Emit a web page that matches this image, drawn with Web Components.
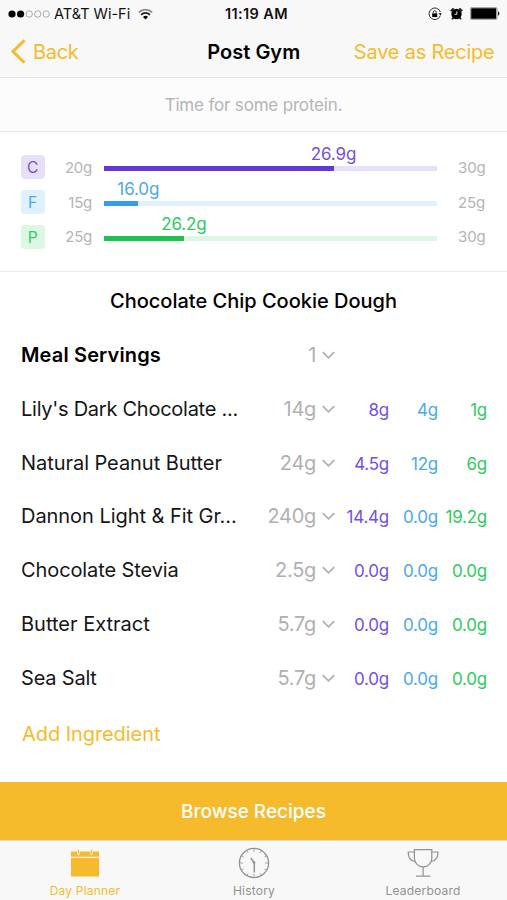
<!DOCTYPE html>
<html lang="en">
<head>
<meta charset="utf-8">
<title>Post Gym</title>
<style>
  body {
    margin: 0;
    font-family: Inter, "Liberation Sans", sans-serif;
  }
</style>
</head>
<body>
<meal-screen></meal-screen>

<script>
// Small helper shared by all the components
function define(name, html, setup) {
  const tmpl = document.createElement('template');
  tmpl.innerHTML = html;

  customElements.define(name, class extends HTMLElement {
    constructor() {
      super();
      this.attachShadow({ mode: 'open' });
    }

    connectedCallback() {
      if (this.shadowRoot.childNodes.length) return;
      this.shadowRoot.appendChild(tmpl.content.cloneNode(true));
      if (setup) setup(this, this.shadowRoot);
    }
  });
}

// Status bar
define('status-bar', `
<style>
  :host {
    display: grid;
    grid-template-columns: 1fr auto 1fr;
    align-items: center;
    height: 27px;
    padding: 0 7px 0 8px;
    box-sizing: border-box;
    font-size: 14.5px;
    color: #111;
  }
  .left, .right { display: flex; align-items: center; }
  .right { justify-content: flex-end; }
  .dots { margin-right: 4px; }
  .wifi { margin-left: 8px; }
  .time { font-weight: 600; letter-spacing: 0.4px; padding-left: 5px; }
  .alarm { margin: 0 7px 0 8px; }
  svg { display: block; }
</style>
<div class="left">
  <svg class="dots" width="42" height="8" viewBox="0 0 42 8">
    <circle cx="4" cy="4" r="3.6"/><circle cx="12.6" cy="4" r="3.6"/>
    <g fill="none" stroke="#999" stroke-width=".8"><circle cx="21.2" cy="4" r="3.2"/><circle cx="29.7" cy="4" r="3.2"/><circle cx="38.2" cy="4" r="3.2"/></g>
  </svg>
  <span>AT&amp;T Wi-Fi</span>
  <svg class="wifi" width="15" height="12" viewBox="0 0 15 12">
    <g fill="none" stroke-width="1.7">
      <path stroke="#8a8a8a" d="M.8 4.3a9.5 9.5 0 0 1 13.4 0"/>
      <path stroke="#222" d="M3 6.8a6.4 6.4 0 0 1 9 0"/>
    </g>
    <path d="M7.5 11.5 5 9a3.5 3.5 0 0 1 5 0z"/>
  </svg>
</div>
<span class="time">11:19 AM</span>
<div class="right">
  <svg width="14" height="14" viewBox="0 0 14 14">
    <path d="M12.4 8.5A5.8 5.8 0 1 1 12.4 5" fill="none" stroke="#333"/>
    <path d="M10.6 6.3h3.2l-1.5 2z"/>
    <rect x="4.2" y="6.4" width="5" height="3.6"/>
    <path d="M5.2 6.5V5.2a1.5 1.5 0 0 1 3 0v1.3" fill="none" stroke="#222" stroke-width=".9"/>
  </svg>
  <svg class="alarm" width="13" height="13" viewBox="0 0 13 13">
    <circle cx="6.5" cy="7" r="5.2"/>
    <path d="M.8 4.2 3.7 1.3M12.2 4.2 9.3 1.3M3.2 10.8 2 12.2M9.8 10.8 11 12.2" stroke="#111" stroke-width="1.9"/>
    <path d="M6.8 4.3v3H4.5" fill="none" stroke="#fff" stroke-width=".9"/>
  </svg>
  <svg width="30" height="13" viewBox="0 0 30 13">
    <rect x=".4" y=".4" width="26.6" height="12.2" rx="1.5" fill="none" stroke="#777" stroke-width=".7"/>
    <rect x="1.2" y="1.2" width="25" height="10.6" rx=".6"/>
    <path d="M28 4.5c1.8.4 1.8 3.6 0 4z"/>
  </svg>
</div>`);

// Navigation bar: back link, title, action
define('nav-bar', `
<style>
  :host {
    display: grid;
    grid-template-columns: 1fr auto 1fr;
    align-items: center;
    height: 50px;
    padding: 0 12.5px 0 11px;
    box-sizing: border-box;
    font-size: 20px;
    color: var(--accent);
  }
  .back { display: flex; align-items: center; gap: 7px; letter-spacing: -0.3px; }
  .back svg { position: relative; top: -1px; }
  .title { color: #000; font-weight: 600; padding-left: 2px; }
  .action { text-align: right; letter-spacing: -0.22px; white-space: nowrap; }
</style>
<div class="back">
  <svg width="15" height="25" viewBox="0 0 15 25"><path d="M13.5 1.2 2 12.5l11.5 11.3" fill="none" stroke="currentColor" stroke-width="3"/></svg>
  <slot name="back"></slot>
</div>
<div class="title"><slot></slot></div>
<div class="action"><slot name="action"></slot></div>`);

// One macro: badge, minimum, track with the current value, maximum
define('macro-range', `
<style>
  :host {
    display: grid;
    grid-template-columns: 24px 47.5px 344.5px 1fr;
    align-items: center;
    height: 34.75px;
    font-size: 15px;
    color: #b4b4b6;
  }
  .badge {
    height: 24px;
    border-radius: 4px;
    background: var(--tint);
    color: var(--tone);
    line-height: 25px;
    text-align: center;
    font-size: 15.5px;
  }
  .min { text-align: right; letter-spacing: -0.2px; }
  .max { padding-left: 21.5px; letter-spacing: -0.2px; }
  .track {
    position: relative;
    height: 5px;
    margin: 2.5px 0 0 12px;
    background: var(--tint);
  }
  .fill { height: 100%; background: var(--solid); }
  .value {
    position: absolute;
    bottom: 6px;
    transform: translateX(-50%);
    font-size: 17px;
    line-height: 21px;
    letter-spacing: -0.1px;
    color: var(--tone);
  }
</style>
<div class="badge"></div>
<div class="min"></div>
<div class="track"><div class="fill"></div><div class="value"></div></div>
<div class="max"></div>`, (el, root) => {
  ['badge', 'min', 'value', 'max'].forEach(key => {
    root.querySelector('.' + key).textContent = el.getAttribute(key);
  });
  root.querySelector('.fill').style.width = el.getAttribute('at') + '%';
  root.querySelector('.value').style.left = el.getAttribute('at') + '%';
});

// Ingredient line with amount picker and macros
define('meal-row', `
<style>
  :host {
    display: grid;
    grid-template-columns: 225px 70px 19px 54px 49px 49px;
    align-items: baseline;
    height: 53.8px;
    line-height: 53.8px;
    font-size: 20px;
    color: #161616;
    white-space: nowrap;
  }
  .name { letter-spacing: var(--track, -0.05px); }
  :host([strong]) .name { font-weight: 600; color: #000; letter-spacing: 0.15px; }
  .amount { text-align: right; color: #b0b0b2; letter-spacing: -0.3px; }
  svg { justify-self: end; }
  .macro { font-size: 17px; letter-spacing: -0.25px; display: flex; justify-content: flex-end; }
  .c { color: #7450e0; }
  .f { color: #4ba8ee; }
  .p { color: #2ecb5d; }
</style>
<div class="name"><slot></slot></div>
<div class="amount"></div>
<svg width="13" height="11" viewBox="0 0 13 11"><path d="m.8 1.2 5.7 5.6 5.7-5.6" fill="none" stroke="#b0b0b2" stroke-width="1.8"/></svg>
<div class="macro c"></div>
<div class="macro f"></div>
<div class="macro p"></div>`, (el, root) => {
  root.querySelector('.amount').textContent = el.getAttribute('amount');
  ['c', 'f', 'p'].forEach(key => {
    root.querySelector('.' + key).textContent = el.getAttribute(key) || '';
  });
});

// Tab bar item, icon goes to the default slot
define('tab-item', `
<style>
  :host {
    display: flex;
    flex-direction: column;
    align-items: center;
    flex: 1;
    padding-top: 6px;
    color: #929292;
    font-size: 12px;
  }
  :host([active]) { color: var(--accent); }
  .icon { height: 34px; }
  .label { line-height: 19px; letter-spacing: 0.2px; padding-left: 1px; }
</style>
<div class="icon"><slot></slot></div>
<div class="label"><slot name="label"></slot></div>`);

define('meal-screen', `
<style>
  :host {
    --accent: #f5bb2c;
    display: flex;
    flex-direction: column;
    width: 507px;
    height: 900px;
    overflow: hidden;
    background: #fff;
  }
  :host > * { flex-shrink: 0; }
  .top, .note, .macros, .recipe, .rows, .add, .browse, .tabs { box-sizing: border-box; flex: none; }
  .top { height: 78px; background: #f8f8f8; border-bottom: 1px solid #e6e6e6; }
  .note {
    height: 54px;
    line-height: 55px;
    background: #fcfcfc;
    border-bottom: 1px solid #e9e9e9;
    text-align: center;
    font-size: 17px;
    letter-spacing: -0.18px;
    color: #b5b5b7;
  }
  .macros { height: 140px; padding: 18px 20px 0 20.6px; border-bottom: 1px solid #eaeaea; }
  .recipe { height: 57px; line-height: 59px; text-align: center; font-size: 20px; font-weight: 500; }
  .rows { padding-left: 21px; }
  .add { padding: 0 22px; line-height: 57px; height: 76px; font-size: 20px; letter-spacing: -0.07px; color: var(--accent); }
  .browse {
    height: 58.4px;
    line-height: 60px;
    text-align: center;
    background: var(--accent);
    color: #fff;
    font-size: 19px;
    font-weight: 500;
  }
  .tabs { display: flex; height: 60px; background: #f8f8f8; border-top: 1px solid #e0dccf; }
  svg { display: block; }
</style>
<div class="top">
  <status-bar></status-bar>
  <nav-bar><span slot="back">Back</span>Post Gym<span slot="action">Save as Recipe</span></nav-bar>
</div>
<div class="note">Time for some protein.</div>
<div class="macros">
  <macro-range badge="C" min="20g" max="30g" value="26.9g" at="69" style="--tint:#e6e0fb;--tone:#7450e0;--solid:#6338d8"></macro-range>
  <macro-range badge="F" min="15g" max="25g" value="16.0g" at="10.3" style="--tint:#e0f1fe;--tone:#4ba8ee;--solid:#379de8"></macro-range>
  <macro-range badge="P" min="25g" max="30g" value="26.2g" at="24" style="--tint:#dcf7e4;--tone:#2ecb5d;--solid:#1ac44d"></macro-range>
</div>
<div class="recipe">Chocolate Chip Cookie Dough</div>
<div class="rows">
  <meal-row strong amount="1">Meal Servings</meal-row>
  <meal-row amount="14g" c="8g" f="4g" p="1g" style="--track:-0.26px">Lily's Dark Chocolate ...</meal-row>
  <meal-row amount="24g" c="4.5g" f="12g" p="6g">Natural Peanut Butter</meal-row>
  <meal-row amount="240g" c="14.4g" f="0.0g" p="19.2g">Dannon Light &amp; Fit Gr...</meal-row>
  <meal-row amount="2.5g" c="0.0g" f="0.0g" p="0.0g" style="--track:-0.1px">Chocolate Stevia</meal-row>
  <meal-row amount="5.7g" c="0.0g" f="0.0g" p="0.0g" style="--track:0px">Butter Extract</meal-row>
  <meal-row amount="5.7g" c="0.0g" f="0.0g" p="0.0g" style="--track:-0.2px">Sea Salt</meal-row>
</div>
<div class="add">Add Ingredient</div>
<div class="browse">Browse Recipes</div>
<div class="tabs">
  <tab-item active>
    <svg width="28" height="30" viewBox="0 0 28 30">
      <path fill="currentColor" d="M0 4.5h6.2v2a1.3 1.3 0 0 0 2.6 0v-2h10.4v2a1.3 1.3 0 0 0 2.6 0v-2H28v5.3H0zM0 11h28v18.5H0zM6.8 2.8h1.4v3.5H6.8zM19.8 2.8h1.4v3.5h-1.4z"/>
    </svg>
    <span slot="label">Day Planner</span>
  </tab-item>
  <tab-item>
    <svg width="32" height="32" viewBox="0 0 32 32" fill="none" stroke="currentColor">
      <circle cx="16" cy="16" r="14.6" stroke-width="1.3"/>
      <path stroke-width=".8" d="M16 2v3M16 27v3M2 16h3M27 16h3M9 3.9l1 1.7M23 3.9l-1 1.7M3.9 9l1.7 1M28.1 9l-1.7 1M3.9 23l1.7-1M28.1 23l-1.7-1M9 28.1l1-1.7M23 28.1l-1-1.7"/>
      <path stroke-width="1.5" d="M16.3 25.5V16l-3.5-5.2"/>
      <circle cx="16" cy="15.5" r=".9" fill="currentColor"/>
    </svg>
    <span slot="label">History</span>
  </tab-item>
  <tab-item>
    <svg width="32" height="32" viewBox="0 0 32 32" fill="none" stroke="currentColor" stroke-width="1.2">
      <path d="M7.4 2.6h17.4v8.6a8.7 8.7 0 0 1-17.4 0zM16.1 20v8.8M9 29.2h14.2"/>
      <path d="M7.4 5H1.2c0 5.5 2 8.8 6.8 9.5M24.8 5H31c0 5.5-2 8.8-6.8 9.5"/>
    </svg>
    <span slot="label">Leaderboard</span>
  </tab-item>
</div>`);
</script>
</body>
</html>
